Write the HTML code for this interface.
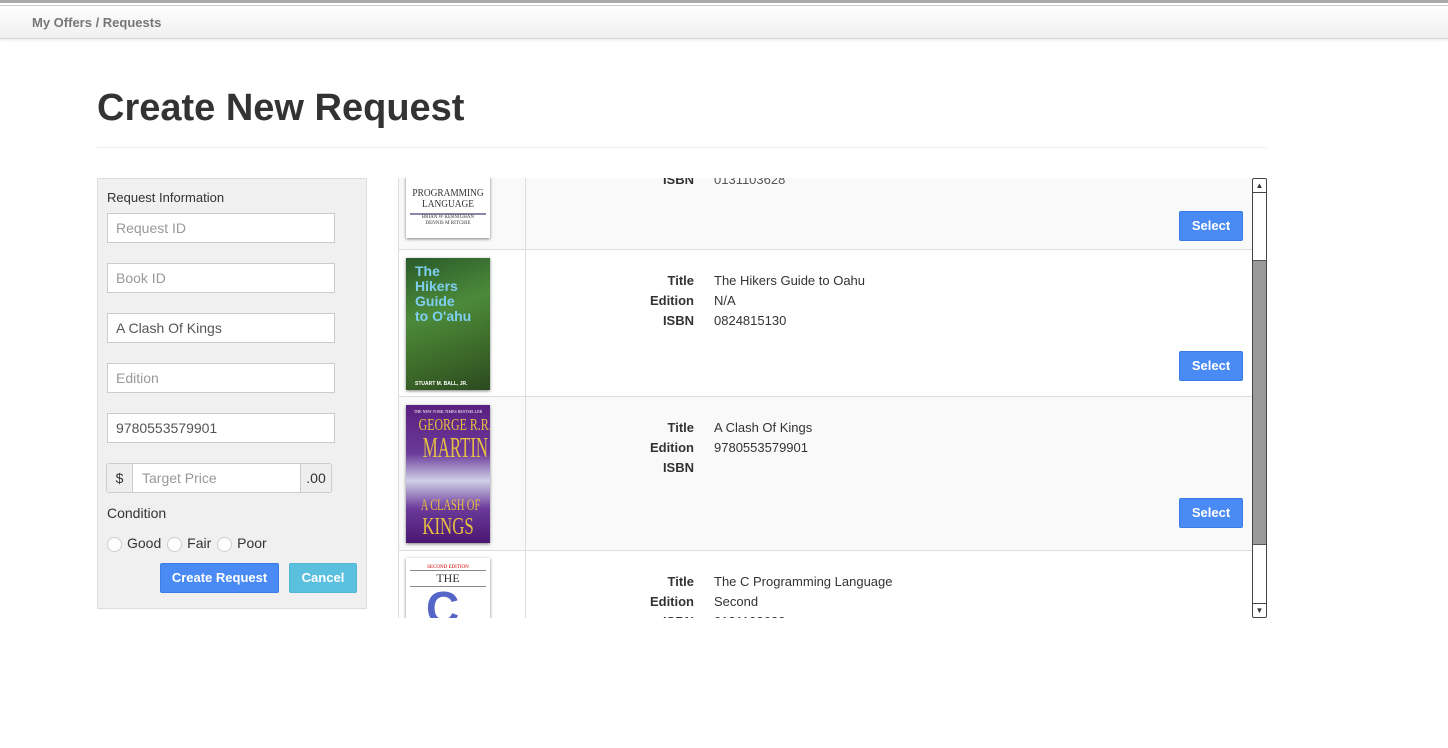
<!DOCTYPE html>
<html><head><style>
*{box-sizing:border-box;margin:0;padding:0}
body{width:1448px;height:748px;background:#fff;font-family:"Liberation Sans",sans-serif;color:#333;position:relative;overflow:hidden}
.abs{position:absolute}
.nav{left:0;top:0;width:1448px;height:39px;border-top:3px solid #aaa;background:linear-gradient(#fff,#f0f0f0);border-bottom:1px solid #d4d4d4;box-shadow:0 1px 3px rgba(0,0,0,.1)}
.nav:before{content:"";position:absolute;left:0;top:2px;width:100%;border-top:1px solid #ccc}
.nav span{position:absolute;left:32px;top:12px;font-size:13px;font-weight:bold;color:#777}
h1{position:absolute;left:97px;top:87px;font-size:38px;font-weight:bold;color:#333;letter-spacing:0}
.hr{left:97px;top:147px;width:1170px;border-top:1px solid #eee}
.panel{left:97px;top:178px;width:270px;height:431px;background:#f0f0f0;border:1px solid #ddd}
.inp{position:absolute;left:9px;width:228px;height:30px;background:#fff;border:1px solid #ccc;font-size:14px;color:#999;padding:6px 8px}
.inp.v{color:#555}
.btn{position:absolute;height:30px;color:#fff;font-size:13px;font-weight:bold;text-align:center;line-height:28px;border-radius:2px}
.blue{background:#4a8af4;border:1px solid #3b7be8}
.radio{display:inline-block;width:15px;height:15px;border:1px solid #ccc;border-radius:50%;background:#fff;vertical-align:middle;margin-right:5px}
.tbl{left:398px;top:178px;width:854px;height:440px;overflow:hidden}
.row{position:absolute;left:0;width:854px;border-bottom:1px solid #ddd}
.row .img{position:absolute;left:0;top:0;width:128px;height:100%;border-right:1px solid #ddd;border-left:1px solid #ddd}
.cov{position:absolute;left:7px;width:84px;box-shadow:0 1px 3px rgba(0,0,0,.5);overflow:hidden;white-space:nowrap}
.lab{position:absolute;left:200px;width:96px;text-align:right;font-size:13px;font-weight:bold;line-height:20px}
.val{position:absolute;left:316px;font-size:13px;line-height:20px}
.sel{left:781px;width:64px}
</style></head><body>
<div class="abs nav"><span>My Offers / Requests</span></div>
<h1>Create New Request</h1>
<div class="abs hr"></div>
<div class="abs panel">
 <div class="abs" style="left:9px;top:11px;font-size:13px">Request Information</div>
 <div class="inp" style="top:34px">Request ID</div>
 <div class="inp" style="top:84px">Book ID</div>
 <div class="inp v" style="top:134px">A Clash Of Kings</div>
 <div class="inp" style="top:184px">Edition</div>
 <div class="inp v" style="top:234px">9780553579901</div>
 <div class="abs" style="left:8px;top:284px;width:226px;height:30px;border:1px solid #ccc;border-radius:3px;background:#fff;font-size:14px">
  <div class="abs" style="left:0;top:0;width:26px;height:28px;background:#eee;border-right:1px solid #ccc;text-align:center;line-height:28px">$</div>
  <div class="abs" style="left:35px;top:6px;color:#999">Target Price</div>
  <div class="abs" style="right:0;top:0;width:31px;height:28px;background:#eee;border-left:1px solid #ccc;text-align:center;line-height:28px">.00</div>
 </div>
 <div class="abs" style="left:9px;top:326px;font-size:14px">Condition</div>
 <div class="abs" style="left:9px;top:356px;font-size:14px;white-space:nowrap"><span class="radio"></span>Good <span class="radio" style="margin-left:2px"></span>Fair <span class="radio" style="margin-left:2px"></span>Poor</div>
 <div class="btn blue" style="left:62px;top:384px;width:119px">Create Request</div>
 <div class="btn" style="left:191px;top:384px;width:68px;background:#5bc0de;border:1px solid #4fb6d6">Cancel</div>
</div>
<div class="abs tbl">
 <div class="row" style="top:-60px;height:132px;background:#f9f9f9">
  <div class="img"><div class="cov" style="top:-10px;height:130px;background:#fff;font-family:'Liberation Serif',serif;font-size:11px;text-align:center;color:#333;padding-top:80px;line-height:11px"><div style="transform:scaleX(.85)">PROGRAMMING<br>LANGUAGE</div><div style="border-top:2px solid #88a;margin:3px 4px;font-size:5px;line-height:6px">BRIAN W KERNIGHAN<br>DENNIS M RITCHIE</div></div></div>
  <div class="lab" style="top:52px">ISBN</div><div class="val" style="top:52px;color:#555">0131103628</div>
  <div class="btn blue abs sel" style="top:93px">Select</div>
 </div>
 <div class="row" style="top:72px;height:147px;background:#fff">
  <div class="img"><div class="cov" style="top:8px;height:132px;background:linear-gradient(160deg,#2a5a2a,#4c8a3a 40%,#3d6b2a 70%,#2c4a20);color:#7fd0f0;font-weight:bold;font-size:14px;line-height:15px;padding:6px 0 0 9px">The<br>Hikers<br>Guide<br>to O'ahu<div style="color:#fff;font-size:5px;margin-top:58px;line-height:5px">STUART M. BALL, JR.</div></div></div>
  <div class="lab" style="top:21px">Title<br>Edition<br>ISBN</div>
  <div class="val" style="top:21px">The Hikers Guide to Oahu<br>N/A<br>0824815130</div>
  <div class="btn blue abs sel" style="top:101px">Select</div>
 </div>
 <div class="row" style="top:219px;height:154px;background:#f9f9f9">
  <div class="img"><div class="cov" style="top:8px;height:138px;background:linear-gradient(#5a1f80,#6b3a9a 35%,#d0d0e8 55%,#6b3a9a 75%,#4a1670);color:#e8c040;font-family:'Liberation Serif',serif;text-align:center;padding-top:4px"><div style="font-size:4px;line-height:6px;color:#fff">THE NEW YORK TIMES BESTSELLER</div><div style="font-size:17px;line-height:20px;transform:scaleX(.7)">GEORGE R.R.</div><div style="font-size:28px;line-height:28px;transform:scaleX(.6)">MARTIN</div><div style="height:34px"></div><div style="font-size:16px;line-height:18px;transform:scaleX(.65)">A CLASH OF</div><div style="font-size:24px;line-height:24px;transform:scaleX(.7)">KINGS</div></div></div>
  <div class="lab" style="top:21px">Title<br>Edition<br>ISBN</div>
  <div class="val" style="top:21px">A Clash Of Kings<br>9780553579901</div>
  <div class="btn blue abs sel" style="top:101px">Select</div>
 </div>
 <div class="row" style="top:373px;height:154px;background:#fff">
  <div class="img"><div class="cov" style="top:7px;height:132px;background:#fff;text-align:center;font-family:'Liberation Serif',serif;font-size:12px;padding-top:7px"><div style="font-size:5px;color:#c00">SECOND EDITION</div><div style="border-top:1px solid #888;border-bottom:1px solid #888;margin:0 4px">THE</div><div style="color:#5565c8;font-size:46px;font-weight:bold;font-family:'Liberation Sans';line-height:42px;text-align:left;padding-left:20px">C</div></div></div>
  <div class="lab" style="top:21px">Title<br>Edition<br>ISBN</div>
  <div class="val" style="top:21px">The C Programming Language<br>Second<br>0131103628</div>
 </div>
</div>
<div class="abs" style="left:1252px;top:178px;width:15px;height:440px;border:1px solid #444;border-radius:2px;background:#fff">
 <div class="abs" style="left:0;top:0;width:13px;height:14px;border-bottom:1px solid #444;font-size:8px;text-align:center;line-height:13px">▲</div>
 <div class="abs" style="left:0;top:81px;width:13px;height:285px;background:#999;border-top:1px solid #555;border-bottom:1px solid #555"></div>
 <div class="abs" style="left:0;bottom:0;width:13px;height:14px;border-top:1px solid #444;font-size:8px;text-align:center;line-height:13px">▼</div>
</div>
</body></html>
